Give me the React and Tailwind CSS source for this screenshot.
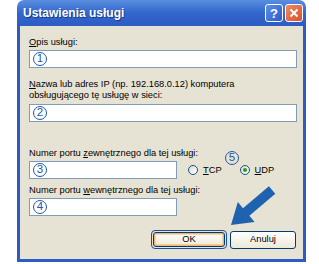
export default function App() {
  const Num = ({ n }) => (
    <div className="w-[14px] h-[14px] rounded-full border-[1.5px] border-[#2257a8] flex items-center justify-center text-[11.5px] leading-none text-[#2257a8]">
      {n}
    </div>
  );

  const Field = ({ n, className }) => (
    <div
      className={`h-[18px] bg-white border border-[#7f9db9] flex items-center pl-[3px] ${className}`}
    >
      <Num n={n} />
    </div>
  );

  const Radio = ({ checked }) => (
    <div className="w-[10px] h-[10px] rounded-full border border-[#1c5180] bg-gradient-to-br from-[#dcdcd4] to-white flex items-center justify-center">
      {checked && <div className="w-[4px] h-[4px] rounded-full bg-[#21a121]" />}
    </div>
  );

  return (
    <div className="relative w-[319px] h-[264px] bg-white pl-[17px] font-['Liberation_Sans',Arial,sans-serif]">
      <div className="relative w-[289px] h-[262px] flex flex-col">
        {/* Title bar */}
        <div className="h-[26px] rounded-t-[7px] bg-gradient-to-b from-[#5a8ee0] via-[#3366cc] to-[#2c5cc4] flex items-center pl-[6px] pr-[3px]">
          <span className="text-white font-bold text-[12px] [text-shadow:1px_1px_#1a3a8a]">
            Ustawienia usługi
          </span>
          <div className="ml-auto flex gap-[2px]">
            <div className="w-[18px] h-[18px] rounded-[3px] border border-white bg-gradient-to-br from-[#5d8fe6] to-[#2a5ccc] flex items-center justify-center text-white font-bold text-[13px] leading-none">
              ?
            </div>
            <div className="w-[18px] h-[18px] rounded-[3px] border border-white bg-gradient-to-br from-[#ee8a5c] to-[#d8502a] flex items-center justify-center">
              <svg width="10" height="10" viewBox="0 0 10 10">
                <path d="M1.5 1.5 L8.5 8.5 M8.5 1.5 L1.5 8.5" stroke="white" strokeWidth="2" />
              </svg>
            </div>
          </div>
        </div>

        {/* Body */}
        <div className="flex-1 flex flex-col border-x-[3px] border-b-[3px] border-[#2c5bc4] bg-[#e6e3d4] pl-[9px] pr-[6px] pt-[11px] text-[9.3px] leading-[11px] text-black">
          <div>
            <u>O</u>pis usługi:
          </div>
          <Field n="1" className="mt-[2px]" />

          <div className="mt-[11px]">
            <u>N</u>azwa lub adres IP (np. 192.168.0.12) komputera
            <br />
            obsługującego tę usługę w sieci:
          </div>
          <Field n="2" className="mt-[3px]" />

          <div className="mt-[26px]">
            Numer portu <u>z</u>ewnętrznego dla tej usługi:
          </div>
          <div className="mt-[2px] flex items-center">
            <Field n="3" className="w-[148px]" />
            <div className="ml-[11px] flex items-center gap-[5px]">
              <Radio />
              <span>
                <u>T</u>CP
              </span>
            </div>
            <div className="ml-[18px] flex items-center gap-[5px]">
              <Radio checked />
              <span>
                <u>U</u>DP
              </span>
            </div>
          </div>

          <div className="mt-[6px]">
            Numer portu <u>w</u>ewnętrznego dla tej usługi:
          </div>
          <Field n="4" className="mt-[2px] w-[148px]" />

          <div className="mt-[14px] flex justify-end items-center gap-[3px] pr-[1px]">
            <div className="w-[76px] h-[19px] rounded-[4px] border-[1.5px] border-[#1c4f9c] p-[1px]">
              <div className="w-full h-full rounded-[3px] border border-[#003c74] bg-gradient-to-b from-white to-[#ece9d8] shadow-[inset_0_0_0_1.5px_#f4b46a] flex items-center justify-center">
                OK
              </div>
            </div>
            <div className="w-[66px] h-[18px] rounded-[3px] border border-[#003c74] bg-gradient-to-b from-white to-[#ece9d8] flex items-center justify-center">
              Anuluj
            </div>
          </div>
        </div>

        {/* Callout 5 */}
        <div className="absolute left-[208px] top-[151px] bg-[#e6e3d4]">
          <Num n="5" />
        </div>
      </div>

      {/* Arrow */}
      <svg
        className="absolute left-0 top-0 pointer-events-none"
        width="319"
        height="264"
        viewBox="0 0 319 264"
      >
        <polygon
          points="231,225 237.8,202.1 243,208.2 268.9,186.2 275.3,193.8 249.4,215.8 254.6,221.9"
          fill="#1e62b0"
        />
      </svg>
    </div>
  );
}
